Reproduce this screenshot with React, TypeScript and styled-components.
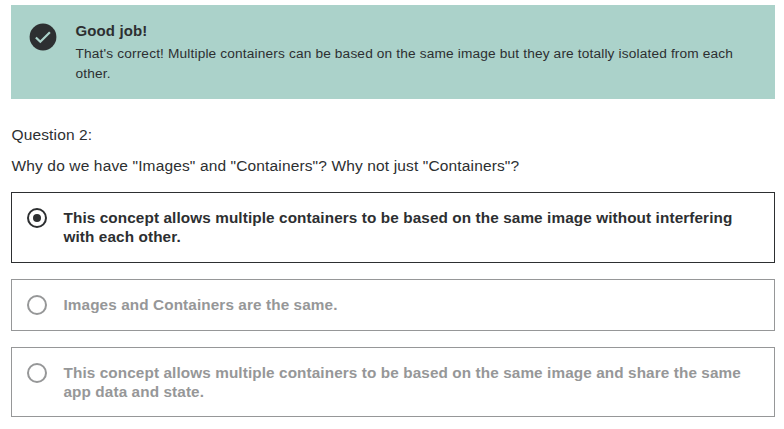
import React, { useState } from "react";
import styled, { createGlobalStyle } from "styled-components";

const INK = "#2d2f31";
const MUTED = "#969798";

const GlobalStyle = createGlobalStyle`
  * { box-sizing: border-box; }
  body {
    margin: 0;
    background: #fff;
    color: ${INK};
    font-family: "Liberation Sans", Arial, sans-serif;
  }
`;

const Page = styled.main`
  padding: 5px 9px 0 11px;
`;

const Alert = styled.section`
  display: flex;
  gap: 17.5px;
  height: 94px;
  padding: 16px 16px 0 17px;
  background: #abd2ca;
`;

const CheckBadge = styled.svg`
  flex: none;
  width: 30px;
  height: 30px;
  margin-top: 1px;
`;

const AlertTitle = styled.h2`
  margin: 0;
  font-size: 15px;
  font-weight: 700;
  line-height: 20px;
  letter-spacing: 0.12px;
`;

const AlertText = styled.p`
  margin: 2.6px 0 0;
  max-width: 680px;
  font-size: 13.7px;
  line-height: 20px;
  letter-spacing: 0.15px;
`;

const Prompt = styled.div`
  margin-top: 25px;
  padding-left: 0.5px;
  font-size: 15.5px;
  line-height: 22.4px;
  letter-spacing: 0.14px;

  p { margin: 0 0 8.6px; }
`;

const Options = styled.div`
  display: grid;
  gap: 16px;
  margin-top: 15px;
`;

const Option = styled.label<{ $selected: boolean }>`
  display: flex;
  align-items: flex-start;
  gap: 16.5px;
  padding: 15px;
  border: 1px solid ${(p) => (p.$selected ? INK : MUTED)};
  color: ${(p) => (p.$selected ? INK : MUTED)};
`;

const Radio = styled.input`
  appearance: none;
  display: grid;
  place-items: center;
  flex: none;
  width: 20px;
  height: 20px;
  margin: 0;
  border: 2px solid currentColor;
  border-radius: 50%;
  color: inherit;

  &:checked::before {
    content: "";
    width: 8px;
    height: 8px;
    border-radius: 50%;
    background: currentColor;
  }
`;

const OptionText = styled.span`
  max-width: 690px;
  padding-bottom: 0.4px;
  font-size: 15.3px;
  font-weight: 700;
  line-height: 19px;
  letter-spacing: 0.105px;
`;

const answers = [
  "This concept allows multiple containers to be based on the same image without interfering with each other.",
  "Images and Containers are the same.",
  "This concept allows multiple containers to be based on the same image and share the same app data and state.",
];

export default function App() {
  const [selected, setSelected] = useState(0);
  return (
    <>
      <GlobalStyle />
      <Page>
        <Alert>
          <CheckBadge viewBox="0 0 30 30" aria-hidden="true">
            <circle cx="15" cy="15" r="13.4" fill={INK} />
            <path d="M7.9 15.5l4.4 4.3 9.6-9.5" fill="none" stroke="#abd2ca" strokeWidth="2.2" />
          </CheckBadge>
          <div>
            <AlertTitle>Good job!</AlertTitle>
            <AlertText>
              That's correct! Multiple containers can be based on the same image but they are totally isolated from each other.
            </AlertText>
          </div>
        </Alert>
        <Prompt>
          <p>Question 2:</p>
          <p>Why do we have "Images" and "Containers"? Why not just "Containers"?</p>
        </Prompt>
        <Options role="radiogroup">
          {answers.map((answer, i) => (
            <Option key={answer} $selected={i === selected}>
              <Radio type="radio" name="answer" checked={i === selected} onChange={() => setSelected(i)} />
              <OptionText>{answer}</OptionText>
            </Option>
          ))}
        </Options>
      </Page>
    </>
  );
}
